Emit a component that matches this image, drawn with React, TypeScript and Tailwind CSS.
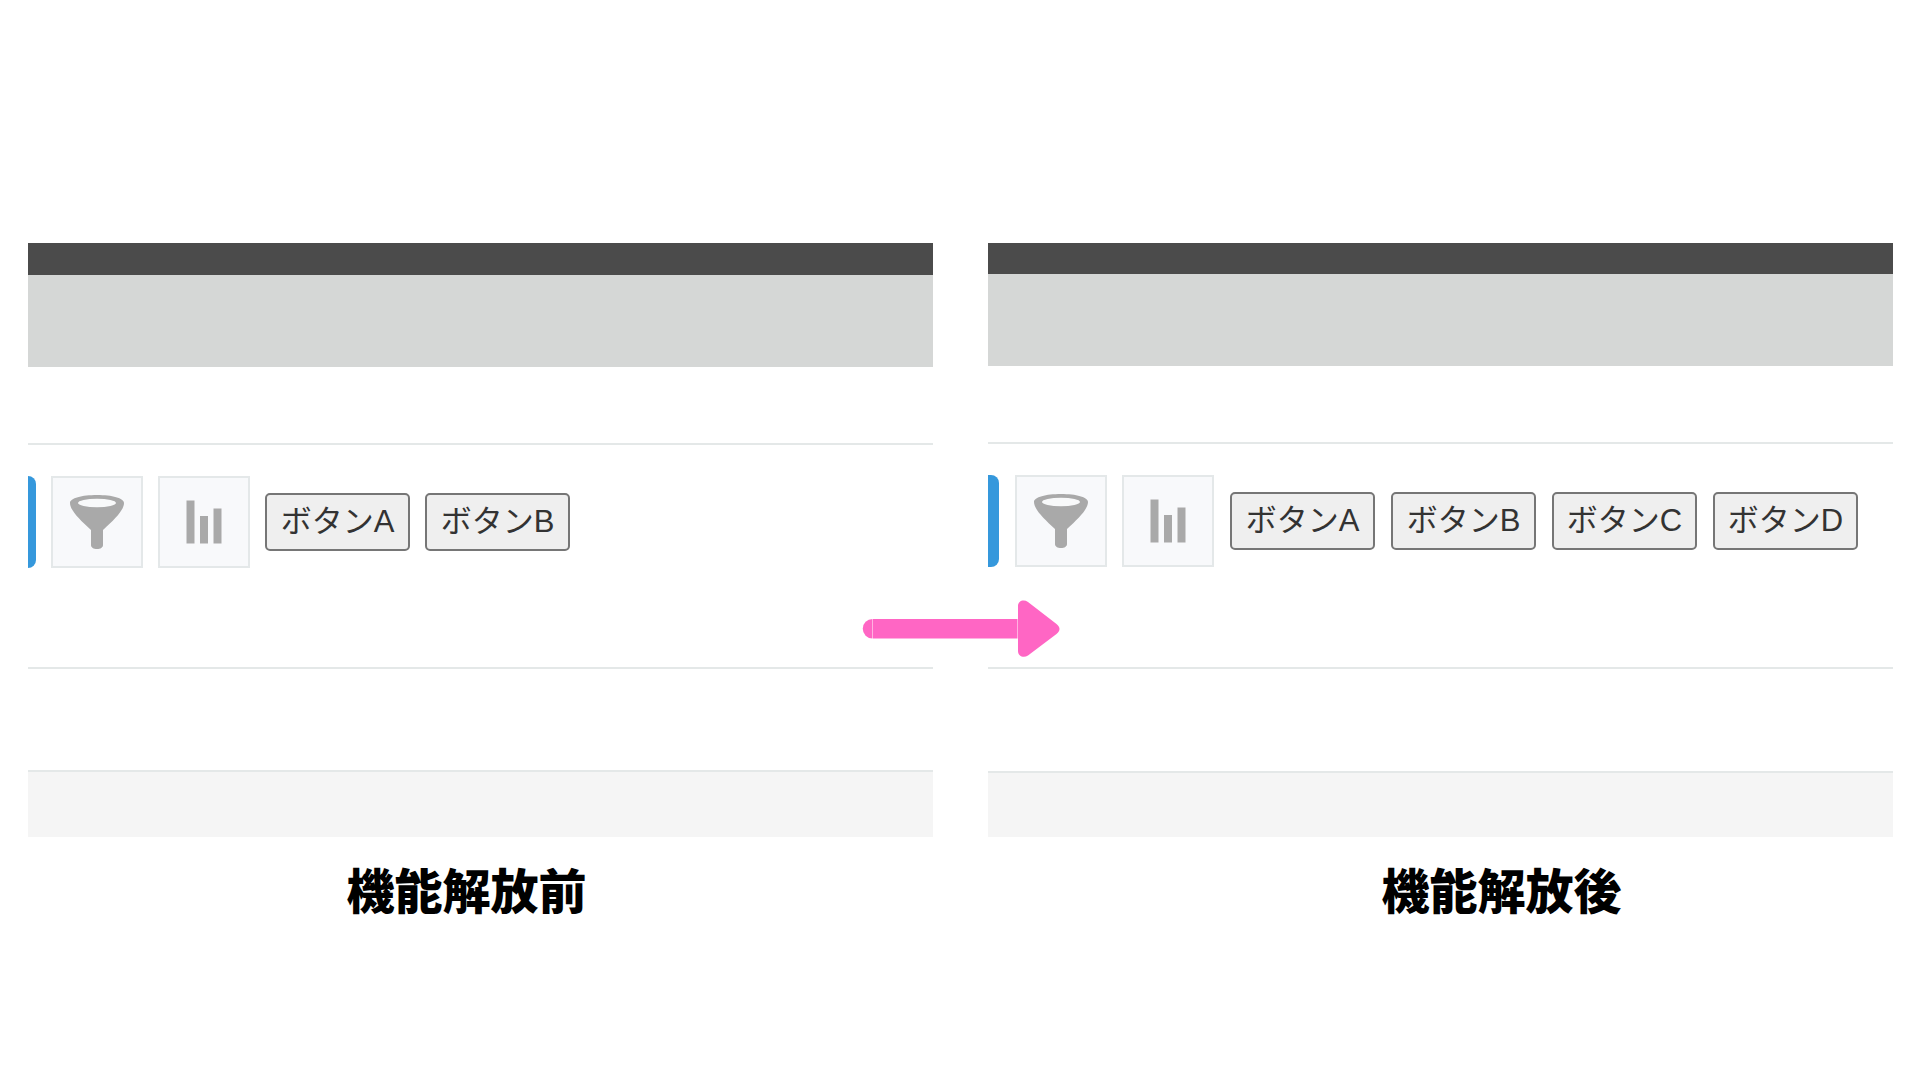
import clsx from 'clsx'

const beforeButtons = ['ボタンA', 'ボタンB']
const afterButtons = ['ボタンA', 'ボタンB', 'ボタンC', 'ボタンD']

function FunnelIcon() {
  return (
    <svg width="54" height="54" viewBox="0 0 54 54" aria-hidden="true">
      <path
        fill="#a9a9a9"
        d="M0 8C0 3 12 0 27 0s27 3 27 8c0 7-9 16-21 27v15c0 2.500-2.500 4-6 4s-6-1.500-6-4V35C9 24 0 15 0 8Z"
      />
      <ellipse cx="27" cy="8" rx="19" ry="4.200" fill="#f8f9fa" />
    </svg>
  )
}

function BarsIcon() {
  return (
    <svg width="36" height="44" viewBox="0 0 36 44" fill="#a9a9a9" aria-hidden="true">
      <rect x="0.500" y="0.500" width="8" height="43" />
      <rect x="14" y="16" width="8" height="27.500" />
      <rect x="27.500" y="8.500" width="8" height="35" />
    </svg>
  )
}

function ArrowIcon() {
  return (
    <svg width="198" height="58" viewBox="0 0 198 58" fill="#ff66c4" aria-hidden="true">
      <path d="M10.500 19a9.750 9.750 0 0 0 0 19.500Z" />
      <rect x="11" y="19" width="144.500" height="19.500" />
      <path d="M156 6c0-5 5.500-7 10-4l28.500 22c4 3 4 7 0 10l-28.500 21.500c-4.500 3-10 .5-10-4.500Z" />
    </svg>
  )
}

function IconButton({label, children}) {
  return (
    <button
      type="button"
      aria-label={label}
      className="flex h-[92px] w-[92px] shrink-0 items-center justify-center border-2 border-[#e4e8e9] bg-[#f8f9fb]"
    >
      {children}
    </button>
  )
}

function Panel({buttons, after = false}) {
  return (
    <section className="flex h-[594px] min-w-0 flex-1 flex-col overflow-hidden bg-white">
      <div className={clsx('shrink-0 bg-[#4b4b4b]', after ? 'h-[31px]' : 'h-8')} />
      <div className="h-[92px] shrink-0 bg-[#d5d7d6]" />
      <div className="h-[78px] shrink-0 border-b-2 border-[#e4e8e8]" />
      <div
        className={clsx(
          'flex shrink-0 items-center border-b-2 border-[#e4e8e8] pt-[31px]',
          after ? 'gap-4 pb-[100px]' : 'gap-[15px] pb-[99px]',
        )}
      >
        {/* 左端で切れている青いボタン */}
        <div
          className={clsx('h-[92px] shrink-0 rounded-r-lg bg-[#3598dc]', after ? 'w-[11px]' : 'w-2')}
        />
        <div className="flex gap-[15px]">
          <IconButton label="絞り込み">
            <FunnelIcon />
          </IconButton>
          <IconButton label="グラフ">
            <BarsIcon />
          </IconButton>
        </div>
        {buttons.map((name) => (
          <button
            key={name}
            type="button"
            className="flex h-[58px] w-[145px] shrink-0 items-center justify-center rounded-[5px] border-2 border-[#767676] bg-[#efefef] font-['Liberation_Sans','Noto_Sans_CJK_JP',sans-serif] text-[31px] leading-10 whitespace-nowrap text-[#333333]"
          >
            {name}
          </button>
        ))}
      </div>
      <div className={clsx('shrink-0', after ? 'h-[102px]' : 'h-[101px]')} />
      <div className="flex-1 border-t-2 border-[#e4e8e8] bg-[#f5f5f5]" />
    </section>
  )
}

function App() {
  return (
    <main
      lang="ja"
      className="min-h-screen bg-white pt-[243px] pr-[27px] pl-7 font-['Noto_Sans_CJK_JP',sans-serif]"
    >
      <div className="relative flex gap-[55px]">
        <Panel buttons={beforeButtons} />
        <Panel buttons={afterButtons} after />
        <div className="absolute top-[357px] left-1/2 -translate-x-1/2">
          <ArrowIcon />
        </div>
      </div>
      <div className="mt-[21px] grid grid-cols-2 gap-[55px] text-center text-5xl leading-[60px] font-black text-black">
        <h2 className="pr-7">機能解放前</h2>
        <h2 className="pl-[122px]">機能解放後</h2>
      </div>
    </main>
  )
}

export default App
